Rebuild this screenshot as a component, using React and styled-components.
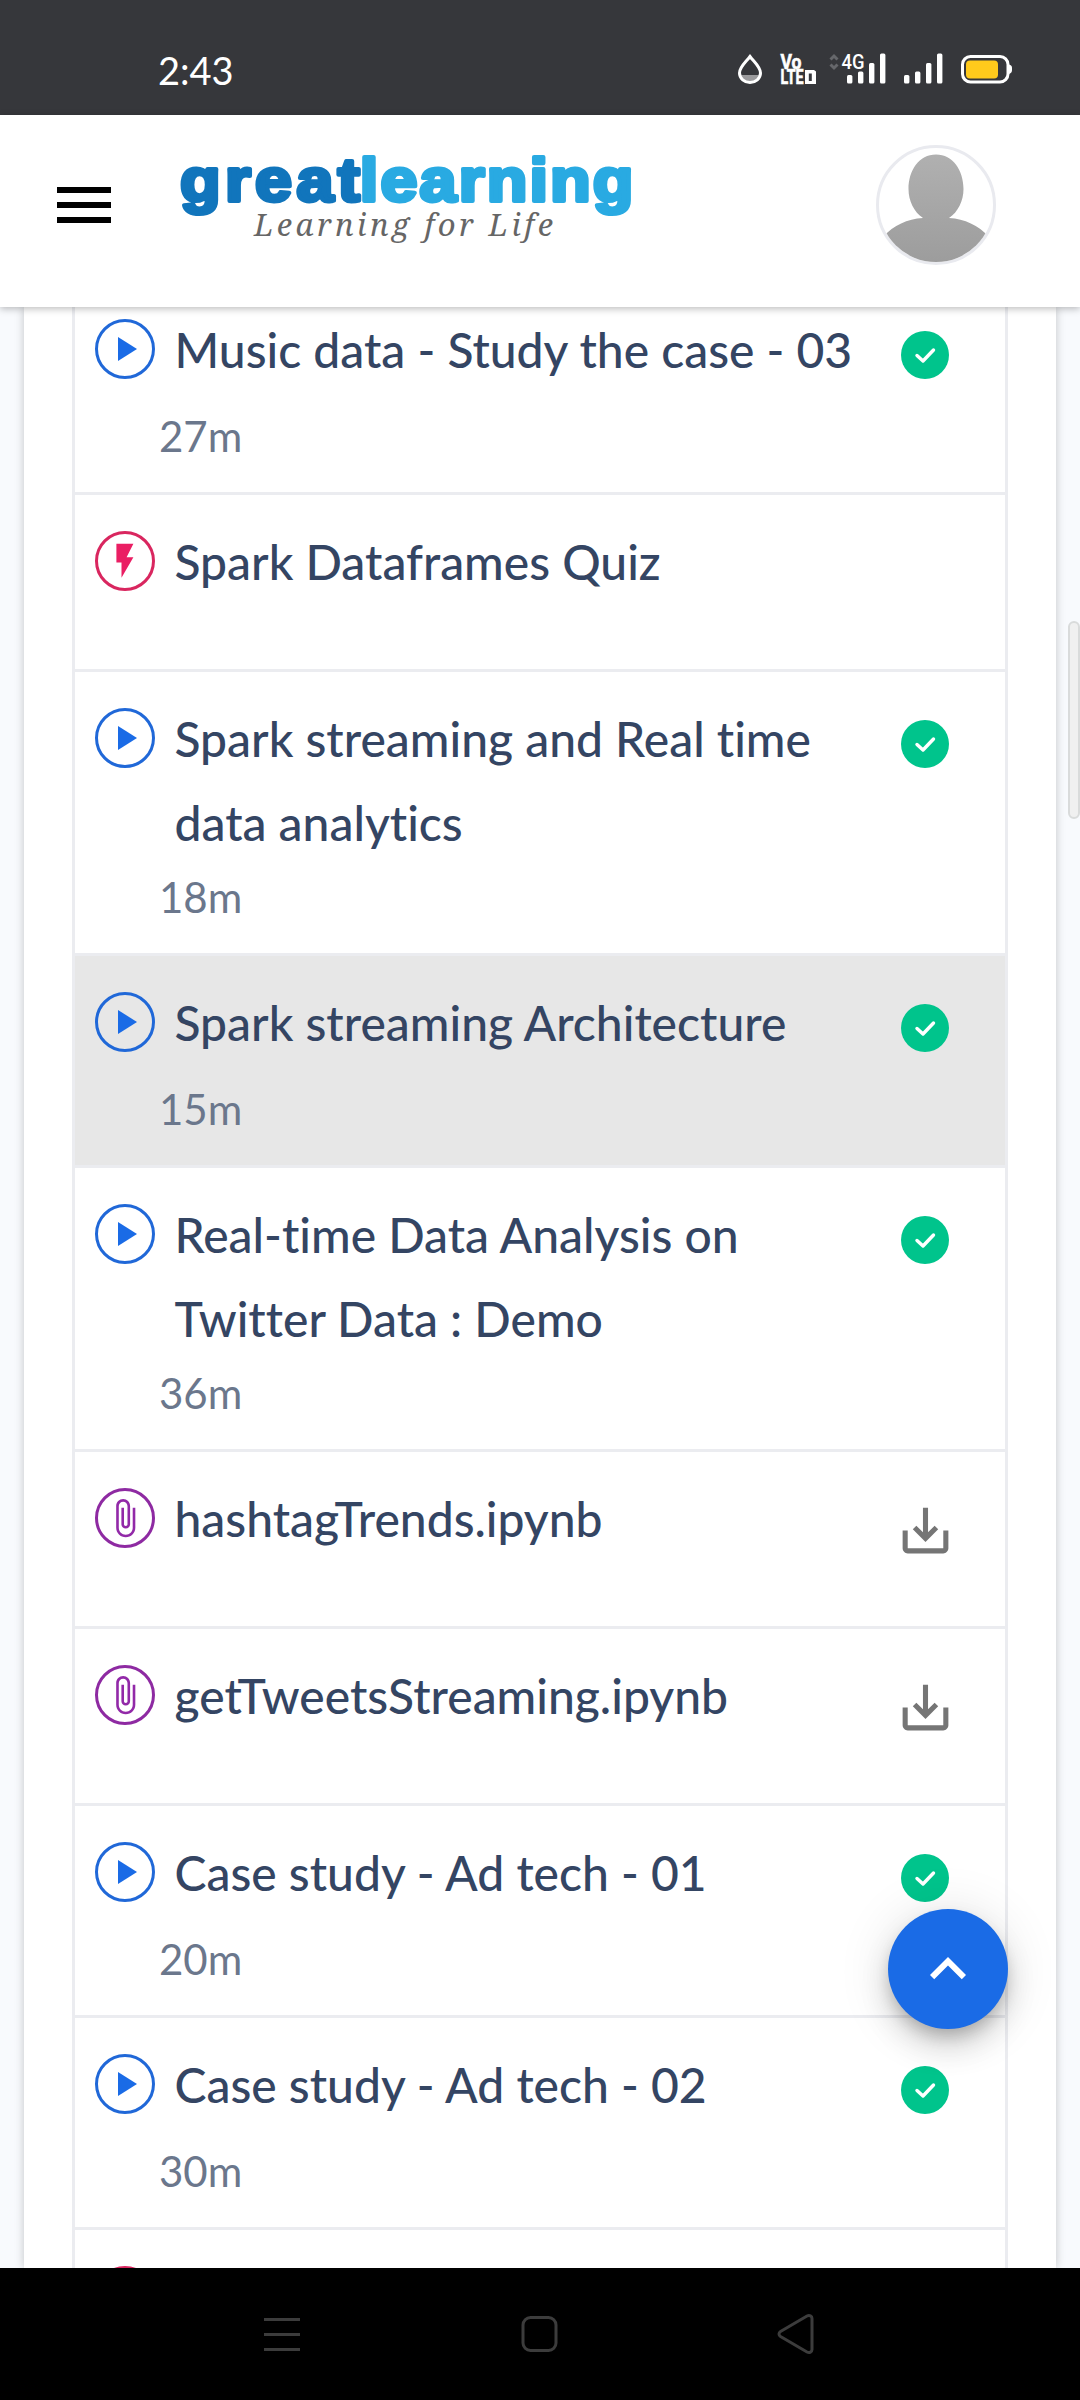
import React from "react";
import styled, { createGlobalStyle } from "styled-components";

const GlobalStyle = createGlobalStyle`
  * { box-sizing: border-box; }
  body { margin: 0; background: #f8fafd; font-family: Lato, sans-serif; font-variant-ligatures: none; }
  svg { display: block; flex: none; overflow: visible; }
`;

const Screen = styled.div`
  width: 1080px;
  height: 2400px;
  display: flex;
  flex-direction: column;
  overflow: hidden;
`;

const StatusBar = styled.div`
  height: 115px;
  flex: none;
  background: #36373b;
  display: flex;
  justify-content: space-between;
  padding: 48px 68px 0 158px;
`;

const Clock = styled.span`
  color: #fff;
  font-size: 38px;
  line-height: 44px;
`;

const StatusIcons = styled.div`
  display: flex;
  padding-top: 5px;
`;

const StatusSlot = styled.div`
  width: ${(p) => p.$width}px;
`;

const Header = styled.header`
  height: 192px;
  flex: none;
  background: #fff;
  display: flex;
  align-items: flex-start;
  padding: 30px 84px 0 48px;
  position: relative;
  z-index: 2;
  box-shadow: 0 2px 7px rgba(0, 0, 0, 0.26);
`;

const MenuButton = styled.button`
  border: 0;
  padding: 0;
  margin: 24px 60px 0 0;
  background: none;
`;

const LogoLink = styled.a`
  flex: 1;
`;

const Avatar = styled.div`
  width: 120px;
  height: 120px;
  border-radius: 50%;
  border: 3px solid #e9eaef;
  overflow: hidden;
  display: flex;
`;

const Page = styled.main`
  flex: 1;
  min-height: 0;
  overflow: hidden;
  padding: 0 24px;
  background: #f8fafd;
  position: relative;
`;

const Card = styled.section`
  display: flow-root;
  height: 100%;
  background: #fff;
  padding: 0 48px;
  box-shadow: 0 0 9px rgba(0, 0, 0, 0.22);
`;

const Lessons = styled.ul`
  list-style: none;
  margin: -24px 0 0;
  padding: 0;
  border: solid #ebecf0;
  border-width: 0 3px;
`;

const Lesson = styled.li`
  display: flex;
  align-items: flex-start;
  min-height: 177px;
  padding: 24px 53px 21px 20px;
  border-bottom: 3px solid #ebecf0;
  background: ${(p) => (p.$active ? "#e7e7e7" : "#fff")};
`;

const TypeIcon = styled.div`
  width: 60px;
  height: 60px;
  margin-top: 12px;
  flex: none;
`;

const LessonBody = styled.div`
  flex: 1;
  padding: 1px 0 0 4px;
`;

const Title = styled.div`
  min-height: 96px;
  width: 700px;
  padding-left: 15.5px;
  color: #344563;
  font-size: 48px;
  font-weight: 500;
  line-height: 84px;
`;

const Duration = styled.div`
  height: 67px;
  color: #6b778c;
  font-size: 42px;
  line-height: 64px;
`;

const Status = styled.div`
  flex: none;
  width: 54px;
  padding-top: ${(p) => (p.$download ? 24 : 24)}px;
  display: flex;
  justify-content: center;
`;

const TopButton = styled.button`
  position: absolute;
  left: 888px;
  top: 1602px;
  width: 120px;
  height: 120px;
  padding: 0;
  border: 0;
  border-radius: 50%;
  background: #1a6be6;
  display: flex;
  align-items: center;
  justify-content: center;
  box-shadow: 0 9px 15px -3px rgba(0, 0, 0, 0.2), 0 18px 30px rgba(0, 0, 0, 0.14),
    0 3px 54px rgba(0, 0, 0, 0.12);
`;

const ScrollThumb = styled.div`
  position: absolute;
  right: 0;
  top: 314px;
  width: 12px;
  height: 198px;
  border-radius: 6px;
  border: 2px solid #d9dbdb;
  background: #f0f0f0;
`;

const NavBar = styled.nav`
  height: 132px;
  flex: none;
  background: #000;
  display: flex;
  align-items: center;
  justify-content: space-between;
  padding: 0 265px 0 264px;
`;

const Bars = () => (
  <svg width="40" height="31" fill="#fff">
    <rect x="0" y="22" width="5.4" height="8.5" rx="1.5" />
    <rect x="11" y="18.4" width="5.4" height="12" rx="1.5" />
    <rect x="22" y="10" width="5.4" height="20.4" rx="1.5" />
    <rect x="33" y="0.5" width="5.4" height="30" rx="1.5" />
  </svg>
);

const Drop = () => (
  <svg width="26" height="32" viewBox="0 0 26 32">
    <path d="M3 22h20c-1 5-5 8-10 8s-9-3-10-8z" fill="#9b9b9d" />
    <path d="M13 3.500C9 9 2.500 14 2.500 20 2.500 25.500 7.500 29.500 13 29.500s10.500-4 10.500-9.500C23.500 14 17 9 13 3.500z" fill="none" stroke="#fff" strokeWidth="3" />
  </svg>
);

const VoLte = () => (
  <svg width="38" height="32" fill="#fff" stroke="#fff" strokeWidth="0.6" fontFamily="Roboto, sans-serif" fontWeight="700">
    <text x="0.5" y="15.500" fontSize="20" textLength="21" lengthAdjust="spacingAndGlyphs">Vo</text>
    <text x="0.5" y="31" fontSize="19.500" textLength="23" lengthAdjust="spacingAndGlyphs">LTE</text>
    <path stroke="none" fillRule="evenodd" d="M25 17h9l2 1.500V31H25zM28.800 20.500v7.500h3V20.500z" />
  </svg>
);

const DataType = () => (
  <svg width="36" height="18" fontFamily="Roboto, sans-serif">
    <path d="M1.500 6.500l3.500-3.500 3.500 3.500M1.500 11.500l3.500 3.500 3.500-3.500" fill="none" stroke="#66676b" strokeWidth="3" />
    <text x="12.500" y="15.500" fontSize="20.500" fontWeight="500" fill="#fff" textLength="23" lengthAdjust="spacingAndGlyphs">4G</text>
  </svg>
);

const SignalWithData = styled.div`
  display: grid;
  grid-template: 32px / 58px;
  > * { grid-area: 1 / 1; }
  > :last-child { margin-left: 18px; }
`;

const Battery = () => (
  <svg width="51" height="32">
    <rect x="1.500" y="3.500" width="45.500" height="25.500" rx="8" fill="none" stroke="#fff" strokeWidth="3" />
    <path d="M48 11.500c3 1 3 2 3 4.500S51 19.500 48 21z" fill="#fff" />
    <rect x="5" y="7.500" width="32" height="18" rx="4" fill="#ffca1c" />
  </svg>
);

const Logo = () => (
  <svg width="460" height="100" role="img" aria-label="greatlearning">
    <g
      transform="scale(1.09 1)"
      fontFamily="'Liberation Sans', Arial, sans-serif"
      fontWeight="700"
      fontSize="61"
      strokeWidth="4"
      strokeLinejoin="round"
    >
      <text x="0" y="56.500" textLength="165" fill="#1175bc" stroke="#1175bc">great</text>
      <text x="165" y="56.500" textLength="251" fill="#29aae2" stroke="#29aae2">learning</text>
    </g>
    <text x="74" y="91" fontFamily="'Noto Serif', 'Liberation Serif', serif" fontStyle="italic" fontSize="31" fill="#666" textLength="299">
      Learning for Life
    </text>
  </svg>
);

const Person = () => (
  <svg width="114" height="114" viewBox="3 3 114 114">
    <defs>
      <linearGradient id="person" x1="0" y1="0" x2="0" y2="120" gradientUnits="userSpaceOnUse">
        <stop offset="0" stopColor="#b2b2b2" />
        <stop offset="1" stopColor="#9c9c9c" />
      </linearGradient>
    </defs>
    <path
      fill="url(#person)"
      d="M60 9.500c17 0 27.500 16 27.500 34.500C87.500 56 82 67 73 73c16 1 29 7 40 19v28H7V92c11-12 24-18 40-19-9-6-14.500-17-14.500-29C32.500 25.500 43 9.500 60 9.500z"
    />
  </svg>
);

const KINDS = {
  video: { color: "#2068d8", mark: <path d="M23 18l19 12-19 12z" fill="#1a6be6" /> },
  quiz: {
    color: "#d9265f",
    mark: <path transform="translate(9.500 9.300) scale(1.7)" d="M7 2v11h3v9l7-12h-4l4-8z" fill="#ea1e63" />,
  },
  file: {
    color: "#8e2aa2",
    mark: (
      <path
        transform="translate(9 9.300) scale(1.74)"
        fill="#9229a8"
        d="M16.500 6v11.500c0 2.210-1.790 4-4 4s-4-1.790-4-4V5c0-1.380 1.120-2.500 2.500-2.500s2.500 1.120 2.500 2.500v10.500c0 .55-.45 1-1 1s-1-.45-1-1V6H10v9.500c0 1.380 1.120 2.500 2.500 2.500s2.500-1.120 2.500-2.500V5c0-2.210-1.790-4-4-4S7 2.790 7 5v12.500c0 3.040 2.460 5.500 5.500 5.500s5.500-2.460 5.500-5.500V6h-1.500z"
      />
    ),
  },
};

const KindIcon = ({ kind }) => (
  <svg width="60" height="60">
    <circle cx="30" cy="30" r="28.500" fill="none" stroke={KINDS[kind].color} strokeWidth="3" />
    {KINDS[kind].mark}
  </svg>
);

const Check = () => (
  <svg width="48" height="48">
    <circle cx="24" cy="24" r="24" fill="#00c48c" />
    <path d="M16 24.500l6 5.500 10.500-11" fill="none" stroke="#fff" strokeWidth="3.400" strokeLinecap="round" strokeLinejoin="round" />
  </svg>
);

const Download = () => (
  <svg width="61" height="61" viewBox="0 0 24 24" fill="#757575">
    <path d="M19 12v7H5v-7H3v7c0 1.100.9 2 2 2h14c1.100 0 2-.9 2-2v-7h-2zm-6 .67l2.590-2.580L17 11.500l-5 5-5-5 1.410-1.410L11 12.670V3h2z" />
  </svg>
);

const LESSONS = [
  { kind: "video", title: "Music data - Study the case - 03", time: "27m", status: "done" },
  { kind: "quiz", title: "Spark Dataframes Quiz" },
  { kind: "video", title: "Spark streaming and Real time data analytics", time: "18m", status: "done" },
  { kind: "video", title: "Spark streaming Architecture", time: "15m", status: "done", active: true },
  { kind: "video", title: "Real-time Data Analysis on Twitter Data : Demo", time: "36m", status: "done" },
  { kind: "file", title: "hashtagTrends.ipynb", status: "download" },
  { kind: "file", title: "getTweetsStreaming.ipynb", status: "download" },
  { kind: "video", title: "Case study - Ad tech - 01", time: "20m", status: "done" },
  { kind: "video", title: "Case study - Ad tech - 02", time: "30m", status: "done" },
  { kind: "quiz", title: "" },
];

export default function App() {
  return (
    <Screen>
      <GlobalStyle />
      <StatusBar>
        <Clock>2:43</Clock>
        <StatusIcons>
          <StatusSlot $width={43}><Drop /></StatusSlot>
          <StatusSlot $width={49}><VoLte /></StatusSlot>
          <StatusSlot $width={75}>
            <SignalWithData>
              <DataType />
              <Bars />
            </SignalWithData>
          </StatusSlot>
          <StatusSlot $width={57}><Bars /></StatusSlot>
          <Battery />
        </StatusIcons>
      </StatusBar>
      <Header>
        <MenuButton aria-label="Menu">
          <svg width="72" height="72" viewBox="0 0 24 24">
            <path d="M3 18h18v-2H3v2zm0-5h18v-2H3v2zm0-7v2h18V6H3z" />
          </svg>
        </MenuButton>
        <LogoLink><Logo /></LogoLink>
        <Avatar><Person /></Avatar>
      </Header>
      <Page>
        <Card>
          <Lessons>
            {LESSONS.map((item, i) => (
              <Lesson key={i} $active={item.active}>
                <TypeIcon><KindIcon kind={item.kind} /></TypeIcon>
                <LessonBody>
                  <Title>{item.title}</Title>
                  {item.time && <Duration>{item.time}</Duration>}
                </LessonBody>
                {item.status && (
                  <Status $download={item.status === "download"}>
                    {item.status === "done" ? <Check /> : <Download />}
                  </Status>
                )}
              </Lesson>
            ))}
          </Lessons>
        </Card>
        <TopButton aria-label="Back to top">
          <svg width="72" height="72" viewBox="0 0 24 24" fill="#fff">
            <path d="M12 8l-6 6 1.410 1.410L12 10.830l4.590 4.580L18 14z" />
          </svg>
        </TopButton>
        <ScrollThumb />
      </Page>
      <NavBar>
        <svg width="36" height="40" fill="#3c3c3c">
          <rect y="4" width="36" height="3" />
          <rect y="19" width="36" height="3" />
          <rect y="34" width="36" height="3" />
        </svg>
        <svg width="36" height="36" fill="none" stroke="#3c3c3c" strokeWidth="3">
          <rect x="2" y="1.500" width="33" height="33" rx="7.500" />
        </svg>
        <svg width="38" height="42" fill="none" stroke="#3c3c3c" strokeWidth="3">
          <path d="M3.500 18.500L30 3c2.500-1.300 5 0 5 2.500v31c0 2.500-2.500 3.800-5 2.500L3.500 23.500c-2-1.300-2-3.700 0-5z" />
        </svg>
      </NavBar>
    </Screen>
  );
}
